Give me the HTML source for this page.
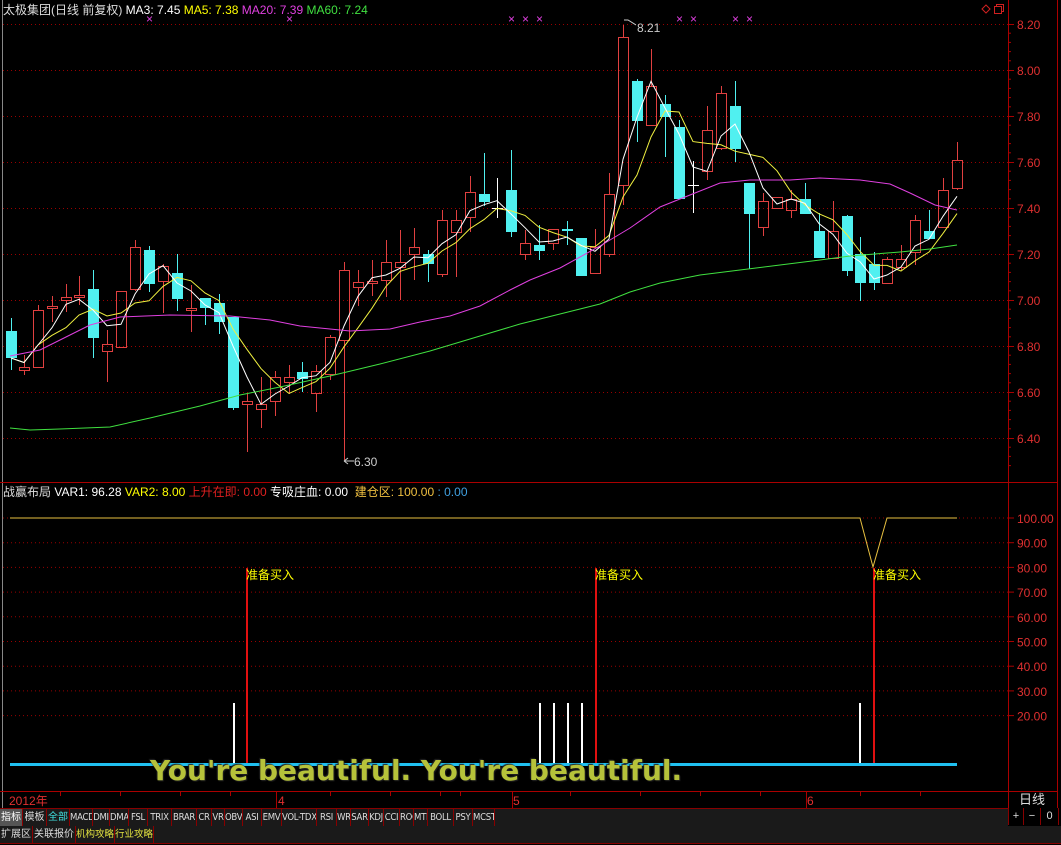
<!DOCTYPE html>
<html><head><meta charset="utf-8">
<style>
html,body{margin:0;padding:0;background:#000;width:1061px;height:845px;overflow:hidden;font-family:"Liberation Sans","Noto Sans CJK SC",sans-serif;}
#wrap{position:relative;width:1061px;height:845px;}
svg{position:absolute;left:0;top:0;}
.t{position:absolute;font-size:12px;white-space:nowrap;line-height:14px;}
.bar{position:absolute;left:0;height:17px;display:flex;font-size:10px;line-height:17px;}
.bar span{border-right:1px solid #800;padding:0;color:#ddd;box-sizing:border-box;text-align:center;flex-shrink:0;overflow:hidden;white-space:nowrap;}
.mono{font-family:"Liberation Sans Narrow","DejaVu Sans Condensed","Liberation Sans",sans-serif;font-size:9.5px;letter-spacing:-0.3px}
</style></head><body><div id="wrap">
<svg id="s" width="1061" height="845" xmlns="http://www.w3.org/2000/svg"></svg>

<div class="t" style="left:3px;top:3px;color:#ddd">太极集团(日线 前复权) <span style="color:#fff">MA3: 7.45</span> <span style="color:#ff0">MA5: 7.38</span> <span style="color:#e040e0">MA20: 7.39</span> <span style="color:#40e040">MA60: 7.24</span></div>
<div class="t" style="left:3px;top:485px;color:#ddd">战赢布局 <span style="color:#fff">VAR1: 96.28</span> <span style="color:#ff0">VAR2: 8.00</span> <span style="color:#e02020">上升在即: 0.00</span> <span style="color:#fff">专吸庄血: 0.00</span> &nbsp;<span style="color:#f0c040">建仓区: 100.00</span> <span style="color:#40a0e0">: 0.00</span></div>

<div class="t" style="left:637px;top:21px;color:#ccc">8.21</div>
<div class="t" style="left:354px;top:455px;color:#ccc">6.30</div>

<div class="t" style="left:246px;top:568px;color:#ff0">准备买入</div>
<div class="t" style="left:595px;top:568px;color:#ff0">准备买入</div>
<div class="t" style="left:873px;top:568px;color:#ff0">准备买入</div>

<div style="position:absolute;left:150px;top:754px;font-size:28px;font-weight:bold;color:#b6c23a;text-shadow:1px 1px 1px #222,-1px -1px 1px #222;white-space:nowrap;font-family:'DejaVu Sans',sans-serif">You're beautiful. You're beautiful.</div>

<div class="t" style="left:9px;top:794px;color:#e03030">2012年</div>
<div class="t" style="left:278px;top:794px;color:#e03030">4</div>
<div class="t" style="left:513px;top:794px;color:#e03030">5</div>
<div class="t" style="left:807px;top:794px;color:#e03030">6</div>
<div class="t" style="left:1019px;top:793px;color:#ddd;font-size:13px">日线</div>

<div class="bar" style="top:808px;width:1008px;background:#1a1a1a;border-top:1px solid #800;border-bottom:1px solid #800">
<span style="width:23px;background:#555;color:#fff">指标</span><span style="width:24px">模板</span><span style="width:23px;color:#40e0e0">全部</span>
<span class="mono" style="width:23px">MACD</span><span class="mono" style="width:17px">DMI</span><span class="mono" style="width:19px">DMA</span><span class="mono" style="width:19px">FSL</span><span class="mono" style="width:24px">TRIX</span><span class="mono" style="width:25px">BRAR</span><span class="mono" style="width:15px">CR</span><span class="mono" style="width:13px">VR</span><span class="mono" style="width:18px">OBV</span><span class="mono" style="width:19px">ASI</span><span class="mono" style="width:20px">EMV</span><span class="mono" style="width:35px">VOL-TDX</span><span class="mono" style="width:20px">RSI</span><span class="mono" style="width:14px">WR</span><span class="mono" style="width:18px">SAR</span><span class="mono" style="width:15px">KDJ</span><span class="mono" style="width:16px">CCI</span><span class="mono" style="width:14px">ROC</span><span class="mono" style="width:14px">MTM</span><span class="mono" style="width:26px">BOLL</span><span class="mono" style="width:19px">PSY</span><span class="mono" style="width:22px">MCST</span>
</div>
<div class="bar" style="top:826px;width:1061px;background:#1a1a1a;border-bottom:1px solid #800">
<span style="width:33px">扩展区</span><span style="width:43px">关联报价</span><span style="width:39px;color:#e0e040;font-size:9.5px">机构攻略</span><span style="width:39px;color:#e0e040;font-size:9.5px">行业攻略</span>
</div>
<div class="bar" style="top:808px;left:1008px;width:53px;background:#000;border:none;font-size:11px">
<span style="width:16px;border-left:1px solid #800">+</span><span style="width:17px">−</span><span style="width:18px">0</span>
</div>

<script>
var s=document.getElementById('s');var h='';
function L(x1,y1,x2,y2,c,w,d){h+='<line x1="'+x1+'" y1="'+y1+'" x2="'+x2+'" y2="'+y2+'" stroke="'+c+'" stroke-width="'+(w||1)+'"'+(d?' stroke-dasharray="'+d+'"':'')+'/>';}
function T(x,y,t,c){h+='<text x="'+x+'" y="'+y+'" fill="'+c+'" font-size="12" font-family="Liberation Sans,sans-serif">'+t+'</text>';}
L(2.5,0,2.5,808,'#888',1);
L(1008.5,0,1008.5,808,'#a00',1);
L(1057.5,0,1057.5,808,'#a00',1);
L(0,482.5,1058,482.5,'#a00',1);
L(0,791.5,1058,791.5,'#a00',1);
var pl=['8.20','8.00','7.80','7.60','7.40','7.20','7.00','6.80','6.60','6.40'];
for(var i=0;i<10;i++){var y=24+i*46;L(3,y+.5,1008,y+.5,'#900',1,'1 3');L(1008,y+.5,1014,y+.5,'#a00',1);T(1017,y+5,pl[i],'#e03030');
 for(var k=1;k<5;k++){if(y+k*9.2<470)L(1008,y+k*9.2,1011,y+k*9.2,'#a00',1);}}
var ll=['100.00','90.00','80.00','70.00','60.00','50.00','40.00','30.00','20.00'];
for(var i=0;i<9;i++){var y=518+i*24.7;L(3,y,1008,y,'#900',1,'1 3');L(1008,y,1014,y,'#a00',1);T(1017,y+5,ll[i],'#e03030');}
[276,512,806].forEach(function(x){L(x+.5,792,x+.5,808,'#a00',1);});
[60,120,180,230,330,390,440,460,570,640,700,760,860,920].forEach(function(x){L(x+.5,792,x+.5,796,'#a00',1);});
h+='<path d="M986 5 L990 9 L986 13 L982 9 Z" fill="none" stroke="#d02020"/>';
h+='<rect x="994.5" y="6.5" width="7" height="7" fill="none" stroke="#d02020"/><path d="M996.5 6.5 V4.5 H1003.5 V11.5 H1001.5" fill="none" stroke="#d02020"/>';
[149,289,511,525,539,679,693,735,749].forEach(function(x){T(x-3,23,'×','#e040e0');});
var C=[[11,'c',331,358,318,370],[24,'r',367,370,355,375],[38,'r',310,367,305,367],[52,'r',306,308,296,322],[66,'r',297,300,284,312],[79,'r',295,297,276,305],[93,'c',289,338,270,358],[107,'r',344,351,330,382],[121,'r',291,347,291,347],[135,'r',247,289,240,291],[149,'c',250,284,246,292],[163,'r',266,281,264,313],[177,'c',273,299,254,311],[191,'r',308,310,285,332],[205,'c',298,308,298,325],[219,'c',303,322,294,334],[233,'c',317,408,317,410],[247,'r',401,404,393,452],[261,'r',404,409,377,428],[275,'r',377,401,371,416],[289,'r',377,382,365,394],[302,'c',372,379,362,392],[316,'r',371,393,365,412],[330,'r',337,374,335,380],
[344,'r',270,340,262,460],[358,'r',282,287,270,306],[372,'r',281,283,260,296],[386,'r',262,280,240,297],[400,'r',262,267,230,300],[414,'r',247,254,228,280],[428,'c',254,264,250,282],[442,'r',220,274,210,277],[456,'r',220,232,210,277],[470,'r',192,217,176,232],[484,'c',194,202,153,206],[497,'w',208,208,178,218],[511,'c',190,232,150,237],[525,'r',243,254,230,260],[539,'c',245,251,225,260],[553,'r',229,243,229,250],[567,'c',229,231,221,245],[581,'c',238,276,238,276],[595,'r',247,273,229,274],[609,'r',194,254,173,257],
[623,'r',37,185,25,205],[637,'c',81,121,79,142],[651,'r',86,125,49,125],[665,'c',104,117,95,157],[679,'c',127,199,120,199],[693,'w',185,185,161,213],[707,'r',130,171,106,180],[721,'r',93,148,86,150],[735,'c',106,149,81,162],[749,'c',183,214,183,269],[763,'r',201,227,193,236],[777,'r',197,208,197,208],[791,'r',199,210,190,218],[805,'c',199,214,183,214],[819,'c',231,258,213,258],[833,'r',231,258,201,258],[847,'c',216,271,215,276],[860,'c',254,283,237,301],[874,'c',264,283,252,290],[887,'r',259,283,257,283],[901,'r',259,267,245,270],[915,'r',220,252,215,265],[929,'c',231,239,210,239],[943,'r',190,227,178,227],[957,'r',160,188,142,190]];
var cl=[];
C.forEach(function(c){var x=c[0],col=c[1]=='r'?'#e04040':(c[1]=='c'?'#50f0f0':'#fff');
 if(c[1]=='c'){L(x+.5,c[4],x+.5,c[5],col,1);h+='<rect x="'+(x-5)+'" y="'+c[2]+'" width="11" height="'+Math.max(1,c[3]-c[2])+'" fill="'+col+'"/>';cl.push(c[3]);}
 else if(c[1]=='r'){L(x+.5,c[4],x+.5,c[2],col,1);L(x+.5,c[3],x+.5,c[5],col,1);h+='<rect x="'+(x-4.5)+'" y="'+(c[2]+.5)+'" width="10" height="'+Math.max(1,c[3]-c[2])+'" fill="none" stroke="'+col+'"/>';cl.push(c[2]);}
 else{L(x+.5,c[4],x+.5,c[5],col,1);L(x-5,c[2]+.5,x+6,c[2]+.5,col,1);cl.push(c[2]);}
});
function ma(n,col){var p=[];for(var i=0;i<C.length;i++){var a=0,m=Math.min(n,i+1);for(var j=0;j<m;j++)a+=cl[i-j];p.push(C[i][0]+','+(a/m).toFixed(1));}h+='<polyline points="'+p.join(' ')+'" fill="none" stroke="'+col+'" stroke-width="1"/>';}
ma(5,'#f0f040');ma(3,'#fff');
h+='<polyline points="10,356 40,350 60,340 90,325 120,317 170,315 230,316 270,320 300,326 350,331 390,329 420,322 450,316 480,306 510,290 530,280 560,268 600,246 630,228 660,207 690,195 720,183 750,180 790,180 820,178 860,180 890,184 910,193 935,205 957,210" fill="none" stroke="#e040e0"/>';
h+='<polyline points="10,428 30,430 60,429 110,427 150,418 200,406 240,395 280,387 330,376 380,364 430,351 480,336 520,324 560,314 600,304 630,292 660,283 700,275 740,270 780,265 820,260 850,256 900,252 930,249 957,245" fill="none" stroke="#40e040"/>';
h+='<path d="M624 20 L628 20 L636 25" fill="none" stroke="#ccc"/><path d="M344 461 H354 M344 461 L348 458 M344 461 L348 464" fill="none" stroke="#ccc"/>';
h+='<polyline points="10,518 860,518 873,567 887,518 957,518" fill="none" stroke="#e8c040" stroke-width="1"/>';
[246,595,873].forEach(function(x){L(x+1,568,x+1,765,'#e01010',2);});
[233,539,553,567,581,859].forEach(function(x){L(x+1,703,x+1,765,'#fff',2);});
L(10,764.5,957,764.5,'#20c0f0',3);
s.innerHTML=h;
</script>
</div></body></html>
